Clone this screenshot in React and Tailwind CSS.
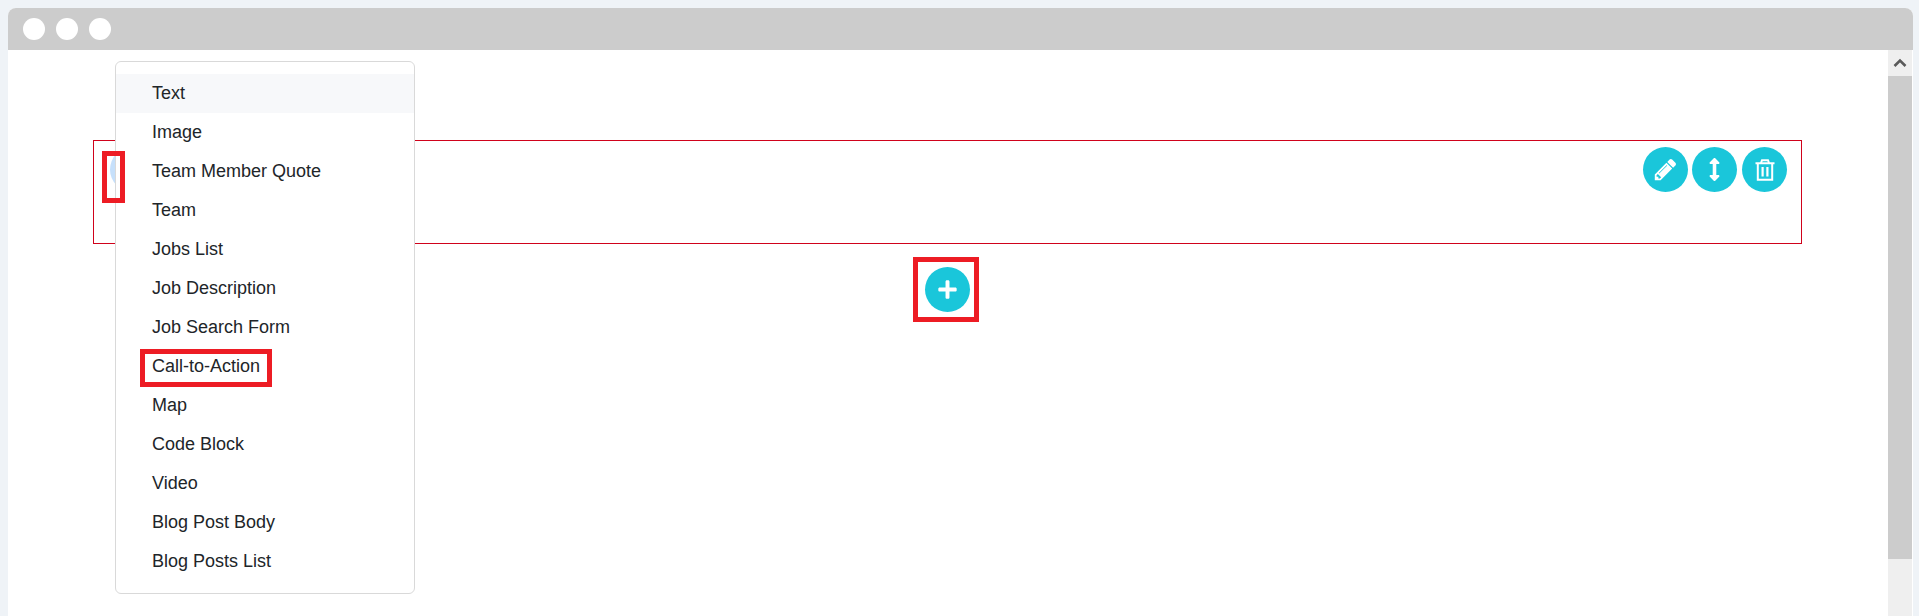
import { FaArrowsAltV, FaPlus } from 'react-icons/fa'

const menuItems = [
  'Text',
  'Image',
  'Team Member Quote',
  'Team',
  'Jobs List',
  'Job Description',
  'Job Search Form',
  'Call-to-Action',
  'Map',
  'Code Block',
  'Video',
  'Blog Post Body',
  'Blog Posts List',
]

function RoundButton({ children, className = 'bg-[#1ac6da]' }) {
  return (
    <div className={`w-[45px] h-[45px] rounded-full flex items-center justify-center text-white ${className}`}>
      {children}
    </div>
  )
}

function PencilIcon() {
  return (
    <svg width="25" height="25" viewBox="0 0 1792 1792" fill="currentColor">
      <path d="M491 1536l91-91-235-235-91 91v107h128v128h107zm523-928q0-22-22-22-10 0-17 7l-542 542q-7 7-7 17 0 22 22 22 10 0 17-7l542-542q7-7 7-17zm-54-192l416 416-832 832h-416v-416zm683 96q0 53-37 90l-166 166-416-416 166-165q36-38 90-38 53 0 91 38l235 234q37 39 37 91z" />
    </svg>
  )
}

function TrashIcon() {
  return (
    <svg width="20" height="22" viewBox="0 0 20 22" fill="none" stroke="currentColor" strokeWidth="2">
      <path d="M0.5 4.2 H19.5" />
      <path d="M6 4 L7 1.2 H13 L14 4" />
      <path d="M2.8 4.2 V20.8 H17.2 V4.2" />
      <path d="M7.6 8 V17.5 M12.4 8 V17.5" strokeWidth="2.2" />
    </svg>
  )
}

export default function App() {
  return (
    <div className="h-[616px] overflow-hidden bg-[#eff3f7] pt-2 pl-2 pr-[6px] font-['Liberation_Sans',Arial,sans-serif]">
      <div className="relative h-[608px] bg-white rounded-t-[8px] overflow-hidden">
        {/* Title bar */}
        <div className="h-[42px] bg-[#cccccc] flex items-center gap-[11px] pl-[15px]">
          <div className="w-[22px] h-[22px] rounded-full bg-white" />
          <div className="w-[22px] h-[22px] rounded-full bg-white" />
          <div className="w-[22px] h-[22px] rounded-full bg-white" />
        </div>

        <div className="flex h-[566px]">
          {/* Page area */}
          <div className="flex-1 pt-[90px] pl-[85px] pr-[86px]">
            <div className="h-[104px] border border-[#d0021b] flex justify-between pt-[6px] pl-[16px] pr-[14px]">
              <RoundButton className="bg-[#c6e0fb]" />
              <div className="flex gap-1">
                <RoundButton><PencilIcon /></RoundButton>
                <RoundButton><FaArrowsAltV size={23} /></RoundButton>
                <RoundButton className="bg-[#1ac6da] ml-px"><TrashIcon /></RoundButton>
              </div>
            </div>
            <div className="flex justify-center mt-[23px]">
              <RoundButton><FaPlus size={21} /></RoundButton>
            </div>
          </div>

          {/* Scrollbar */}
          <div className="w-6 flex flex-col bg-[#efefef] mr-px">
            <div className="h-[26px] flex items-center justify-center">
              <svg width="14" height="10" viewBox="0 0 14 10">
                <path d="M1.5 8 L7 2.5 L12.5 8" fill="none" stroke="#5a5a5a" strokeWidth="2.6" />
              </svg>
            </div>
            <div className="h-[483px] bg-[#cccccc]" />
          </div>
        </div>

        {/* Add-module dropdown */}
        <div className="absolute left-[107px] top-[53px] w-[300px] h-[533px] bg-white border border-[#d9d9d9] rounded-[6px] pt-3 text-[18px] text-[#212529]">
          {menuItems.map((item, i) => (
            <div key={item} className={`h-[39px] leading-[39px] pl-[36px] ${i === 0 ? 'bg-[#f7f8fa]' : ''}`}>
              {item}
            </div>
          ))}
        </div>

        {/* Red annotation boxes */}
        <div className="absolute left-[94px] top-[143px] w-[23px] h-[52px] border-[5px] border-[#ed1c24]" />
        <div className="absolute left-[132px] top-[341px] w-[132px] h-[38px] border-[5px] border-[#ed1c24]" />
        <div className="absolute left-[905px] top-[249px] w-[66px] h-[65px] border-[5px] border-[#ed1c24]" />
      </div>
    </div>
  )
}
